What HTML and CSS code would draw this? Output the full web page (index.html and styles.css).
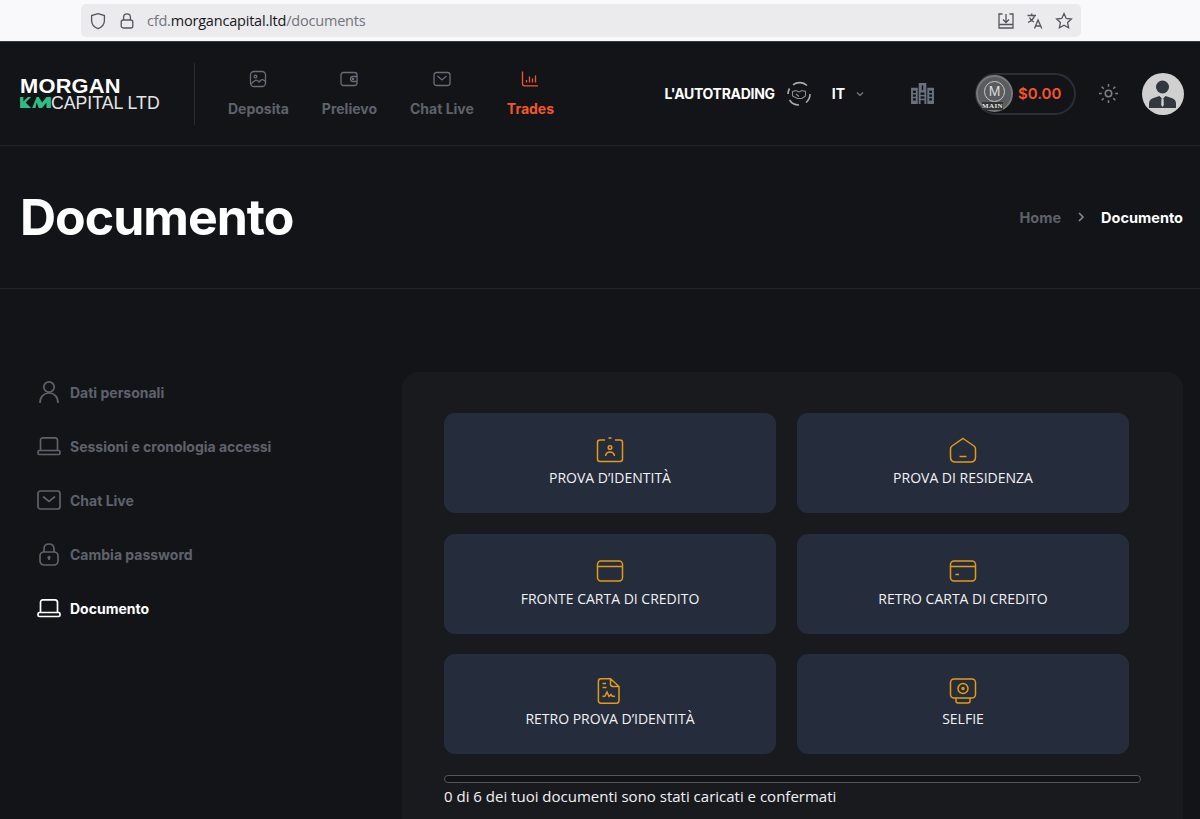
FILE: index.html
```html
<!DOCTYPE html>
<html lang="en">
<head>
    <meta charset="UTF-8">
    <meta name="viewport" content="width=device-width, initial-scale=1.0">
    <title>Documento</title>
    <link rel="stylesheet" href="styles.css">
</head>
<body>
    <div class="browserbar">
        <div class="urlbar">
            <svg class="url-icon" viewBox="0 0 18 18"><path d="M9 1.6 15.4 3.6V8.5C15.4 12.4 12.8 15.2 9 16.6 5.2 15.2 2.6 12.4 2.6 8.5V3.6Z"/></svg>
            <svg class="url-icon" viewBox="0 0 18 18"><rect x="3.2" y="8" width="11.6" height="8" rx="2"/><path d="M5.6 8V5.2C5.6 3.2 7 1.8 9 1.8S12.4 3.2 12.4 5.2V8"/></svg>
            <div class="url"><span>cfd.</span>morgancapital.ltd<span>/documents</span></div>
            <div class="url-tools">
                <svg class="url-icon" viewBox="0 0 18 18"><path d="M5.5 2H2V16H16V2H12.5M9 2V10M6 7.5 9 10.5 12 7.5M2 12.5H16"/></svg>
                <svg class="url-icon" viewBox="0 0 18 18"><path d="M1.5 3.5H10M5.7 1.5V3.5M8.5 3.5C7.8 6.5 5.5 9 2 10.5M3.5 5.5C4.5 7.8 6 9.2 8 10M8.5 16.5 12 8 15.8 16.5M9.7 14H14.6"/></svg>
                <svg class="url-icon" viewBox="0 0 18 18"><path d="M9 1.6 11.2 6.4 16.4 7 12.6 10.6 13.6 15.8 9 13.2 4.4 15.8 5.4 10.6 1.6 7 6.8 6.4Z"/></svg>
            </div>
        </div>
    </div>

    <div class="navbar">
        <div class="logo">
            <div class="logo-top">MORGAN</div>
            <div class="logo-bottom">
                <svg class="logo-mark" viewBox="0 0 28 10"><path d="M0 0H3V4L7 0H10L5 5 10 10H0ZM11 10 15 0H17L20 5 24 0H28V10H24V5L20 10H17L15 5 14 10Z"/></svg>
                <span>CAPITAL LTD</span>
            </div>
        </div>
        <ul class="menu">
            <li class="menu-item">
                <svg class="nav-icon" viewBox="0 0 18 18"><rect x="1.5" y="1.5" width="15" height="15" rx="3.5"/><circle cx="6.5" cy="6.5" r="1.4"/><path d="M2 14 6 10.5C7 9.8 8 10 9 11L10 12 12 10C13 9.3 14.5 9.5 16.5 11.5"/></svg>
                <a href="#">Deposita</a>
            </li>
            <li class="menu-item">
                <svg class="nav-icon" viewBox="0 0 18 18"><rect x="1" y="2.5" width="16" height="13" rx="2.5"/><path d="M17 6.5H13A2.5 2.5 0 0 0 13 11.5H17"/><circle cx="13" cy="9" r=".7"/></svg>
                <a href="#">Prelievo</a>
            </li>
            <li class="menu-item">
                <svg class="nav-icon" viewBox="0 0 18 18"><rect x="1" y="2.5" width="16" height="13" rx="2.5"/><path d="M4.5 6 9 10 13.5 6"/></svg>
                <a href="#">Chat Live</a>
            </li>
            <li class="menu-item active">
                <svg class="nav-icon" viewBox="0 0 18 18"><path d="M1.5 1.5V13.5C1.5 15 2.2 15.8 3.5 15.8H17M5.5 12.5V10M8.5 12.5V6.5M11.5 12.5V8.5M14.5 12.5V5.5"/></svg>
                <a href="#">Trades</a>
            </li>
        </ul>
        <div class="nav-right">
            <div class="autotrading">L'AUTOTRADING</div>
            <svg class="auto-icon" viewBox="0 0 26 26"><path class="auto-ring" d="M7 3.8A11 11 0 0 1 21 4.5M24 13A11 11 0 0 1 20 21.5M13 24A11 11 0 0 1 3.5 19M2 13A11 11 0 0 1 3.5 7.5"/><path d="M6.5 10.5 10 9.5 13 11 16 9.5 19.5 10.5V15L16 17.5H11.5L6.5 15ZM10 13 13 15.5"/></svg>
            <div class="lang">IT</div>
            <svg class="lang-arrow" viewBox="0 0 8 6"><path d="M1 1.5 4 4.5 7 1.5"/></svg>
            <svg class="bank" viewBox="0 0 24 22"><path d="M0 5H7V22H0ZM8 0H16V22H8ZM17 5H24V22H17Z"/><g class="bank-cut"><rect x="2" y="8" width="3" height="2.4"/><rect x="2" y="12" width="3" height="2.4"/><rect x="2" y="16" width="3" height="2.4"/><rect x="19" y="8" width="3" height="2.4"/><rect x="19" y="12" width="3" height="2.4"/><rect x="19" y="16" width="3" height="2.4"/><rect x="10" y="10" width="4" height="2.4"/><rect x="10" y="14" width="4" height="2.4"/><rect x="10" y="18" width="4" height="4"/><rect x="11.2" y="2.5" width="1.6" height="5"/></g></svg>
            <div class="wallet">
                <div class="coin">
                    <span class="coin-m">M</span>
                    <span class="coin-main">MAIN</span>
                </div>
                <div class="amount">$0.00</div>
            </div>
            <svg class="sun" viewBox="0 0 22 22"><circle cx="11" cy="11" r="3.4"/><path d="M11 1V4M11 18V21M1 11H4M18 11H21M3.9 3.9 6 6M16 16 18.1 18.1M3.9 18.1 6 16M16 6 18.1 3.9"/></svg>
            <svg class="avatar" viewBox="0 0 42 42"><circle class="avatar-bg" cx="21" cy="21" r="21"/><circle cx="20.5" cy="14" r="6.5"/><path d="M7 35V31C7 27 9 25.5 13 24.5L17.5 23 20.5 26 23.5 23 28 24.5C32 25.5 34 27 34 31V35Z"/><path class="avatar-tie" d="M19.5 25.5H21.5L21.8 32 20.5 34 19.2 32Z"/></svg>
        </div>
    </div>

    <div class="page-title">
        <h1>Documento</h1>
        <div class="breadcrumb">
            <a href="#">Home</a>
            <svg viewBox="0 0 8 10"><path d="M2 1 6 5 2 9"/></svg>
            <span>Documento</span>
        </div>
    </div>

    <div class="container">
        <div class="sidebar">
            <a class="side-item" href="#">
                <svg viewBox="0 0 24 24"><circle cx="12" cy="7" r="5.2"/><path d="M3 23C3 16.5 7 13 12 13S21 16.5 21 23"/></svg>
                Dati personali
            </a>
            <a class="side-item" href="#">
                <svg viewBox="0 0 24 24"><path d="M3.5 16.5V6.5C3.5 4.8 4.5 3.8 6 3.8H18C19.5 3.8 20.5 4.8 20.5 6.5V16.5"/><rect x="1" y="16.5" width="22" height="4" rx="1.5"/></svg>
                Sessioni e cronologia accessi
            </a>
            <a class="side-item" href="#">
                <svg viewBox="0 0 24 24"><rect x="1" y="3" width="22" height="18" rx="2.5"/><path d="M6 8.5 12 13.5 18 8.5"/></svg>
                Chat Live
            </a>
            <a class="side-item" href="#">
                <svg viewBox="0 0 24 24"><rect x="3" y="10" width="18" height="13" rx="4"/><path d="M7 10V7C7 4 9 2 12 2S17 4 17 7V10M12 15V18"/><circle cx="12" cy="15.5" r=".8"/></svg>
                Cambia password
            </a>
            <a class="side-item active" href="#">
                <svg viewBox="0 0 24 24"><path d="M3.5 16.5V6.5C3.5 4.8 4.5 3.8 6 3.8H18C19.5 3.8 20.5 4.8 20.5 6.5V16.5"/><rect x="1" y="16.5" width="22" height="4" rx="1.5"/></svg>
                Documento
            </a>
        </div>

        <div class="panel">
            <div class="doc-grid">
                <div class="doc-card">
                    <svg viewBox="0 0 28 26"><path d="M9 3H4C2.5 3 1.5 4 1.5 5.5V22C1.5 23.5 2.5 24.5 4 24.5H24C25.5 24.5 26.5 23.5 26.5 22V5.5C26.5 4 25.5 3 24 3H19M12.5 1H15.5"/><circle cx="14" cy="10.5" r="1.8"/><path d="M9.5 19C10 16 12 15 14 15S18 16 18.5 19"/></svg>
                    <div>PROVA D’IDENTITÀ</div>
                </div>
                <div class="doc-card">
                    <svg viewBox="0 0 28 26"><path d="M14 1.5 25 9C26 9.8 26.5 10.5 26.5 12V20C26.5 23 24.5 25 21.5 25H6.5C3.5 25 1.5 23 1.5 20V12C1.5 10.5 2 9.8 3 9ZM10.5 19.5H17.5"/></svg>
                    <div>PROVA DI RESIDENZA</div>
                </div>
                <div class="doc-card">
                    <svg viewBox="0 0 28 26"><rect x="1.5" y="3" width="25" height="20" rx="3.5"/><path d="M1.5 8.5H26.5"/></svg>
                    <div>FRONTE CARTA DI CREDITO</div>
                </div>
                <div class="doc-card">
                    <svg viewBox="0 0 28 26"><rect x="1.5" y="3" width="25" height="20" rx="3.5"/><path d="M1.5 8.5H26.5M6.5 16.5H10"/></svg>
                    <div>RETRO CARTA DI CREDITO</div>
                </div>
                <div class="doc-card">
                    <svg viewBox="0 0 28 26"><path d="M5 .8H14.5L23 8.5V22.5C23 24.3 22 25.2 20.5 25.2H5C3.3 25.2 2.4 24.3 2.4 22.5V3.5C2.4 1.7 3.3 .8 5 .8ZM14.5 .8V6C14.5 7.8 15.5 8.5 17 8.5H23M6.5 5.5H10M6.5 9.5H10.5M6.5 18.5 9 18 11 14 13 18.5 15 16.5 16 18 19 18.5"/></svg>
                    <div>RETRO PROVA D’IDENTITÀ</div>
                </div>
                <div class="doc-card">
                    <svg viewBox="0 0 28 26"><rect x="1.5" y="1" width="25" height="19" rx="3.5"/><circle cx="14" cy="10.5" r="5"/><circle cx="14" cy="10.5" r="1"/><path d="M7 20V23C7 24.3 7.8 25 9 25H19C20.2 25 21 24.3 21 23V20"/></svg>
                    <div>SELFIE</div>
                </div>
            </div>
            <div class="progress"></div>
            <div class="progress-text">0 di 6 dei tuoi documenti sono stati caricati e confermati</div>
        </div>
    </div>
</body>
</html>
```

FILE: styles.css
```css
* {
    box-sizing: border-box;
}

body {
    font-family: Inter, "Liberation Sans", sans-serif;
    margin: 0;
    padding: 0;
    height: 819px;
    overflow: hidden;
    background-color: #131417;
    color: white;
}

/* browser chrome */
.browserbar {
    height: 42px;
    padding: 4px 0 0 81px;
    background-color: #f9f9fb;
    border-bottom: 1px solid #3a3a3c;
}

.urlbar {
    width: 1000px;
    height: 33px;
    padding: 0 8px;
    display: flex;
    align-items: center;
    gap: 11px;
    background-color: #ebebee;
    border-radius: 5px;
}

.url-icon {
    width: 18px;
    height: 18px;
    fill: none;
    stroke: #55565c;
    stroke-width: 1.3;
}

.url {
    font-family: "Open Sans", sans-serif;
    font-size: 14.5px;
    letter-spacing: -0.2px;
    color: #17171a;
}

.url span {
    color: #73737a;
}

.url-tools {
    margin-left: auto;
    display: flex;
    gap: 11px;
}

/* header */
.navbar {
    height: 104px;
    padding: 0 16px 0 20px;
    display: flex;
    align-items: center;
    border-bottom: 1px solid #232429;
}

.logo {
    width: 175px;
    height: 62px;
    margin-top: 0;
    padding-top: 14px;
    border-right: 1px solid #2a2b30;
}

.logo-top {
    font-family: "Liberation Sans", sans-serif;
    font-size: 19.5px;
    font-weight: bold;
    line-height: 18px;
    letter-spacing: 0.2px;
    transform: scaleX(1.12);
    transform-origin: left;
}

.logo-bottom {
    display: flex;
    align-items: center;
    margin-top: -1px;
    font-family: "Liberation Sans", sans-serif;
    font-size: 19px;
    line-height: 18px;
    color: #e4e5e6;
}

.logo-mark {
    width: 31px;
    height: 11px;
    fill: #2ebd85;
}

.logo-bottom span {
    transform: scaleX(0.93);
    transform-origin: left;
    white-space: nowrap;
}

.menu {
    list-style: none;
    display: flex;
    margin: 0;
    padding: 0 0 0 33px;
    gap: 33px;
}

.menu-item {
    display: flex;
    flex-direction: column;
    align-items: center;
    gap: 12px;
}

.menu-item a {
    color: #5f626c;
    text-decoration: none;
    font-size: 14px;
    line-height: 17px;
    font-weight: 700;
}

.menu-item.active a {
    color: #f4562c;
}

.nav-icon {
    width: 18px;
    height: 18px;
    fill: none;
    stroke: #6a6d78;
    stroke-width: 1.3;
}

.menu-item.active .nav-icon {
    stroke: #f4562c;
}

.nav-right {
    margin-left: auto;
    display: flex;
    align-items: center;
}

.autotrading {
    font-size: 14px;
    font-weight: 700;
    letter-spacing: -0.3px;
}

.auto-icon {
    width: 26px;
    height: 26px;
    margin-left: 11px;
    fill: none;
    stroke: #8b8d94;
    stroke-width: 1.1;
}

.auto-ring {
    stroke-width: 1.6;
    stroke: #a9abaf;
}

.lang {
    margin-left: 20px;
    font-size: 14px;
    font-weight: 700;
}

.lang-arrow {
    width: 8px;
    height: 6px;
    margin-left: 11px;
    fill: none;
    stroke: #7d808a;
    stroke-width: 1.1;
}

.bank {
    width: 23px;
    height: 21px;
    margin-left: 47px;
    fill: #6a7180;
}

.bank-cut {
    fill: #131417;
}

.wallet {
    width: 101px;
    height: 42px;
    margin-left: 41px;
    display: flex;
    align-items: center;
    border: 2px solid #2b2e39;
    border-radius: 21px;
}

.coin {
    position: relative;
    width: 37px;
    height: 37px;
    margin-left: -1px;
    display: flex;
    align-items: center;
    justify-content: center;
    border-radius: 50%;
    background-color: #5a5b5e;
    border: 2px solid #77787a;
}

.coin-m {
    width: 21px;
    height: 21px;
    border: 1px solid #c9c9c9;
    border-radius: 50%;
    margin-top: -4px;
    font-family: "Liberation Sans", sans-serif;
    font-size: 14px;
    line-height: 19px;
    text-align: center;
    color: #dddddd;
}

.coin-main {
    position: absolute;
    bottom: 0;
    left: 4px;
    font-family: "Liberation Serif", serif;
    font-size: 7px;
    line-height: 8px;
    font-weight: bold;
    letter-spacing: 0.4px;
    color: #e8e8e8;
    background-color: #333436;
}

.amount {
    margin-left: 5px;
    font-size: 15px;
    font-weight: 600;
    color: #f4562c;
}

.sun {
    width: 21px;
    height: 21px;
    margin-left: 22px;
    fill: none;
    stroke: #7d808a;
    stroke-width: 1.6;
}

.avatar {
    width: 42px;
    height: 42px;
    margin-left: 23px;
    fill: #32383d;
}

.avatar-bg {
    fill: #d0d0d0;
}

.avatar-tie {
    fill: #d0d0d0;
}

/* page title */
.page-title {
    height: 143px;
    padding: 0 17px 0 20px;
    display: flex;
    align-items: center;
    justify-content: space-between;
    border-bottom: 1px solid #232429;
}

.page-title h1 {
    margin: 0;
    font-size: 50px;
    line-height: 60px;
    font-weight: 700;
    letter-spacing: -1px;
}

.breadcrumb {
    display: flex;
    align-items: center;
    font-size: 14.5px;
    font-weight: 700;
}

.breadcrumb a {
    color: #5f626c;
    text-decoration: none;
}

.breadcrumb svg {
    width: 8px;
    height: 10px;
    margin: 0 16px;
    fill: none;
    stroke: #8b8d94;
    stroke-width: 1.5;
}

/* content */
.container {
    padding: 83px 17px 0 37px;
    display: flex;
}

.sidebar {
    width: 365px;
    display: flex;
    flex-direction: column;
    gap: 30px;
    padding-top: 8px;
}

.side-item {
    height: 24px;
    display: flex;
    align-items: center;
    gap: 9px;
    color: #5f626c;
    text-decoration: none;
    font-size: 14px;
    font-weight: 700;
}

.side-item svg {
    width: 24px;
    height: 24px;
    fill: none;
    stroke: #5f626c;
    stroke-width: 1.7;
}

.side-item.active {
    color: white;
}

.side-item.active svg {
    stroke: white;
}

.panel {
    width: 781px;
    height: 500px;
    padding: 41px 42px;
    background-color: #191a1e;
    border-radius: 16px;
}

.doc-grid {
    width: 686px;
    display: grid;
    grid-template-columns: 332px 332px;
    grid-auto-rows: 100px;
    gap: 20.5px 21px;
}

.doc-card {
    padding-top: 24px;
    text-align: center;
    background-color: #252c3b;
    border-radius: 11px;
    font-family: "Open Sans", sans-serif;
    font-size: 14px;
    line-height: 20px;
    font-weight: 500;
    color: #f1f2f4;
}

.doc-card svg {
    display: block;
    width: 28px;
    height: 26px;
    margin: 0 auto 5px;
    fill: none;
    stroke: #e39a16;
    stroke-width: 1.5;
}

.progress {
    width: 697px;
    height: 8px;
    margin-top: 21px;
    background-color: #111215;
    border: 1px solid #54565c;
    border-radius: 4px;
}

.progress-text {
    margin-top: 3px;
    font-family: "Open Sans", sans-serif;
    font-size: 15px;
    line-height: 20px;
    color: #f1f2f4;
}
```
